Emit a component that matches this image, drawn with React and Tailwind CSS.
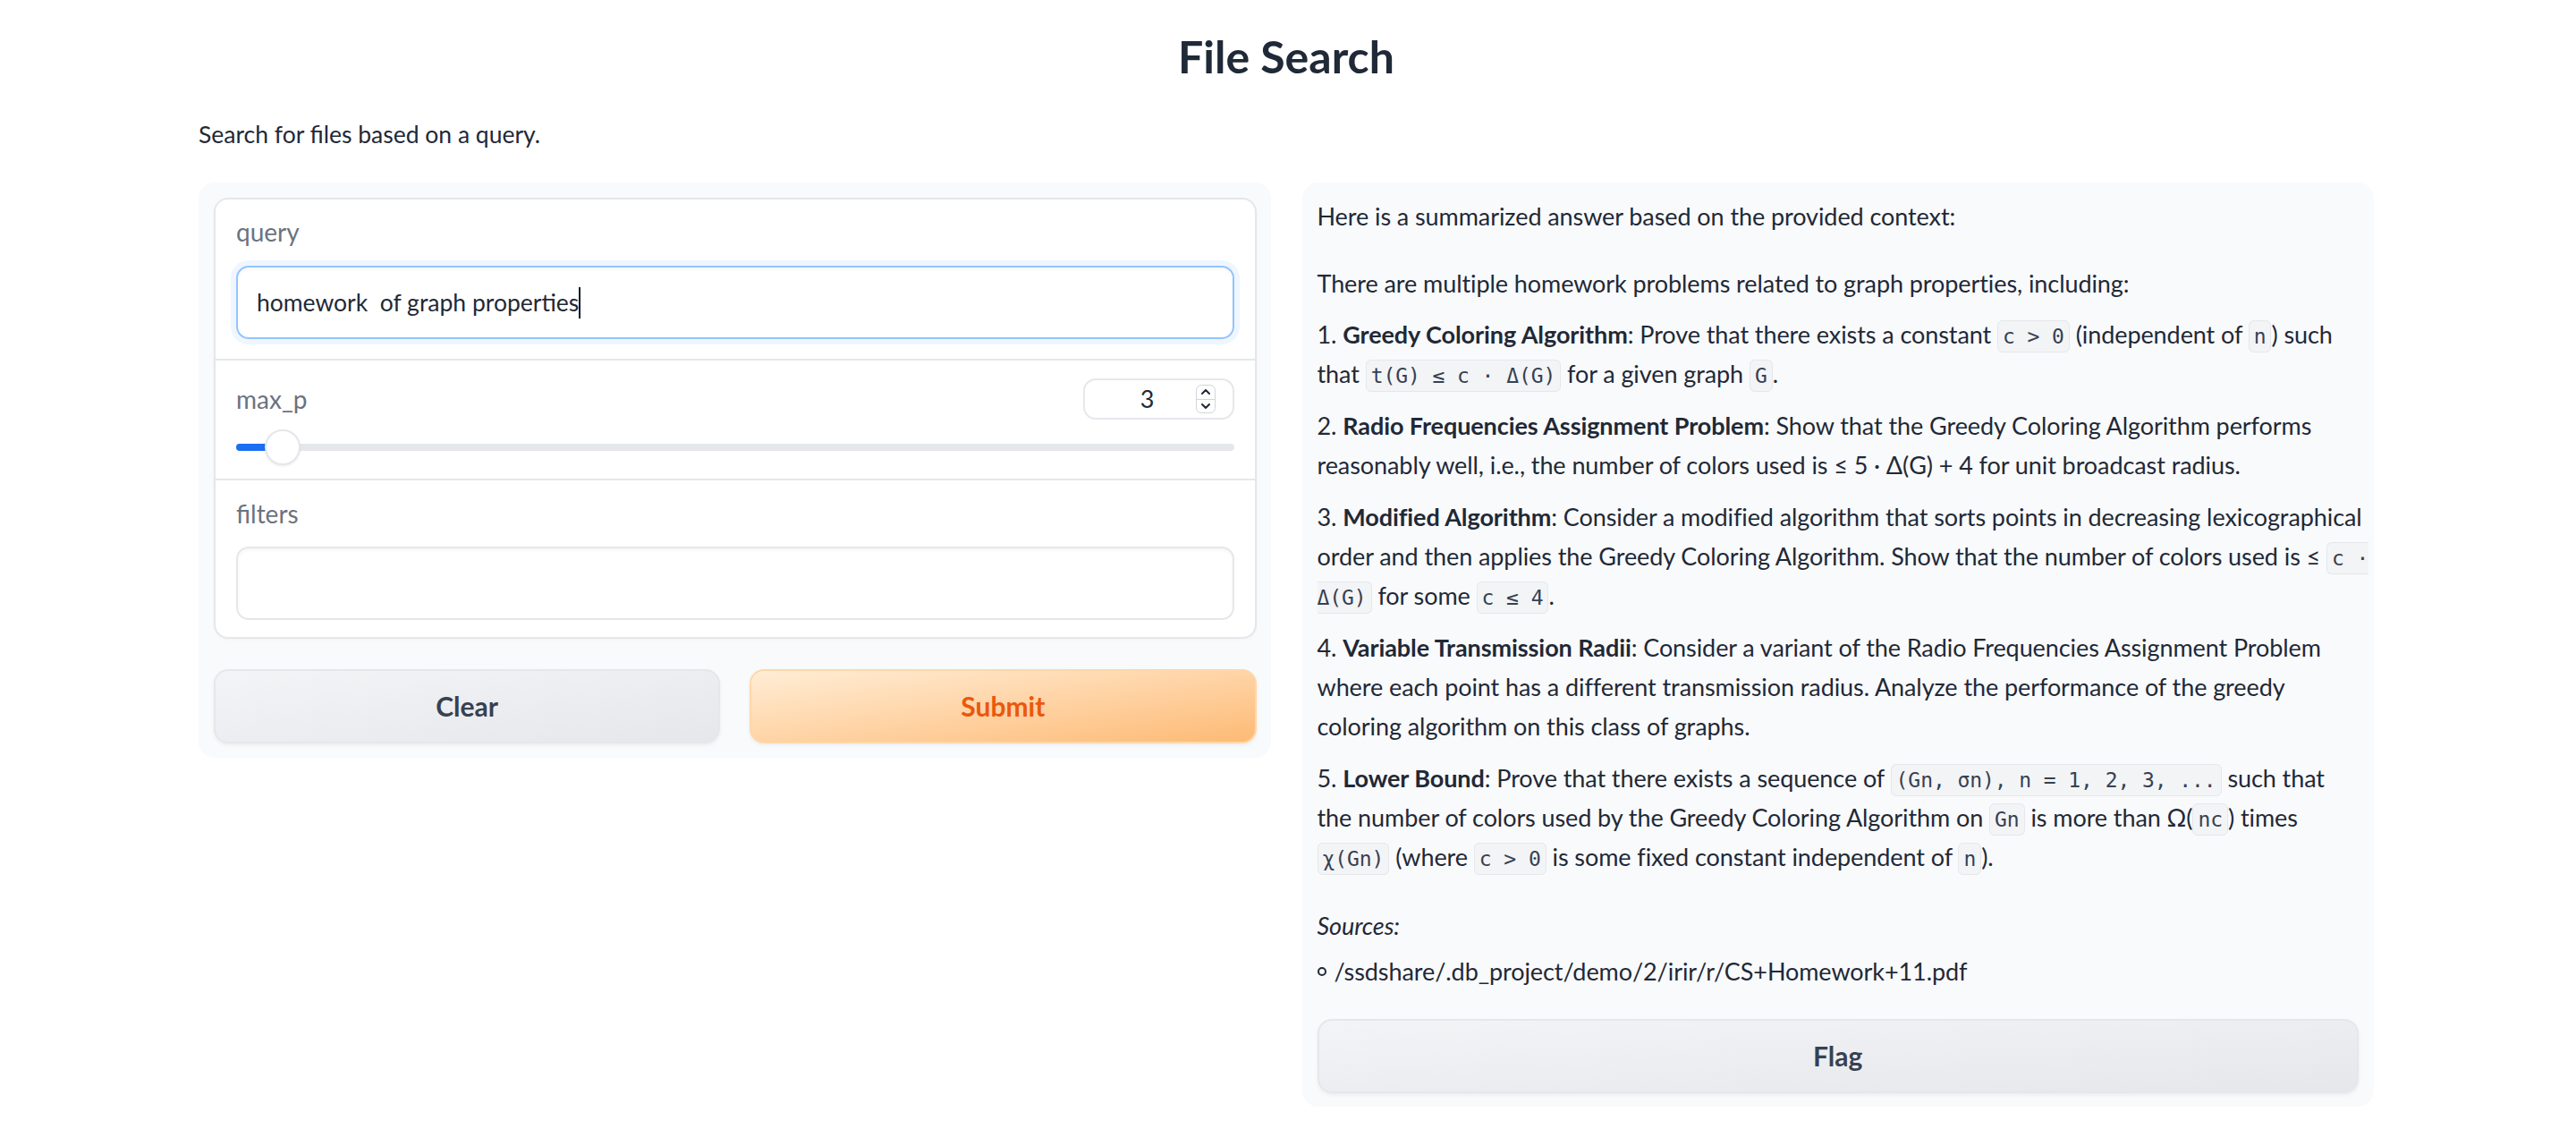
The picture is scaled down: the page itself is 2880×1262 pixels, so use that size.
import React from 'react';

// inline code chip, same look as the markdown renderer
const Code = ({ children }) => (
  <code className="font-['DejaVu_Sans_Mono',monospace] text-[23px] leading-none text-[#374151] bg-[#f3f4f6] border border-[#e5e7eb] rounded-[6px] px-[5px] py-[4px]">
    {children}
  </code>
);

const Label = ({ children }) => (
  <div className="text-[28px] leading-[36px] text-[#6b7280]">{children}</div>
);

const Spinner = () => (
  <div className="flex flex-col w-[22px] h-[32px] rounded-[6px] border border-[#d1d5db] bg-white overflow-hidden">
    <div className="flex-1 flex items-center justify-center border-b border-[#d1d5db]">
      <svg width="12" height="8" viewBox="0 0 12 8" fill="none">
        <path d="M2 6 L6 2 L10 6" stroke="#1f2937" strokeWidth="2" strokeLinecap="round" strokeLinejoin="round" />
      </svg>
    </div>
    <div className="flex-1 flex items-center justify-center">
      <svg width="12" height="8" viewBox="0 0 12 8" fill="none">
        <path d="M2 2 L6 6 L10 2" stroke="#1f2937" strokeWidth="2" strokeLinecap="round" strokeLinejoin="round" />
      </svg>
    </div>
  </div>
);

const GrayButton = ({ children }) => (
  <button className="h-[83px] w-full rounded-[16px] border-2 border-[#e5e7eb] bg-gradient-to-br from-[#f3f4f6] to-[#e5e7eb] text-[30px] font-bold text-[#374151] shadow-[0_2px_4px_rgba(0,0,0,0.06)]">
    {children}
  </button>
);

export default function App() {
  return (
    <div className="min-h-screen bg-white font-['Lato',sans-serif] text-[#1f2937]">
      <div className="ml-[222px] w-[2432px] pt-[32px]">
        <h1 className="text-center text-[50px] leading-[62px] font-bold text-[#1f2937]">File Search</h1>
        <p className="mt-[38px] text-[26.5px] leading-[36px]">Search for files based on a query.</p>

        <div className="mt-[36px] grid grid-cols-2 gap-[35px] items-start">
          {/* left column: inputs */}
          <div className="bg-[#f9fafb] rounded-[18px] pt-[17px] pl-[17px] pr-[16px] pb-[16px]">
            <div className="bg-white border-2 border-[#e5e7eb] rounded-[16px] shadow-[0_1px_3px_rgba(0,0,0,0.04)]">
              <div className="px-[23px] pt-[18px] pb-[22px] border-b-2 border-[#e5e7eb]">
                <Label>query</Label>
                <div className="mt-[20px] h-[82px] rounded-[14px] border-2 border-[#93c5fd] shadow-[0_0_0_6px_#eff6ff,inset_0_2px_4px_rgba(0,0,0,0.04)] flex items-center pl-[21px]">
                  <span className="whitespace-pre text-[26.5px] leading-[36px] text-[#1f2937]">homework  of graph properties</span>
                  <span className="w-[2px] h-[35px] bg-[#111827]" />
                </div>
              </div>

              <div className="px-[23px] pt-[20px] pb-[15px] border-b-2 border-[#e5e7eb]">
                <div className="flex items-center justify-between">
                  <Label>max_p</Label>
                  <div className="w-[169px] h-[46px] rounded-[14px] border-2 border-[#e5e7eb] flex items-center justify-end pr-[19px]">
                    <span className="text-[27px] text-[#1f2937]">3</span>
                    <div className="ml-[46px]">
                      <Spinner />
                    </div>
                  </div>
                </div>
                <div className="mt-[11px] h-[40px] relative flex items-center">
                  <div className="w-full h-[8px] rounded-full bg-[#e5e7eb]" />
                  <div className="absolute left-0 top-[16px] w-[40px] h-[8px] rounded-full bg-[#1c6ef2]" />
                  <div className="absolute left-[32px] top-0 w-[40px] h-[40px] rounded-full bg-white border-2 border-[#e5e7eb] shadow-[0_1px_3px_rgba(0,0,0,0.08)]" />
                </div>
              </div>

              <div className="px-[23px] pt-[19px] pb-[19px]">
                <Label>filters</Label>
                <div className="mt-[19px] h-[82px] rounded-[14px] border-2 border-[#e5e7eb] shadow-[inset_0_2px_4px_rgba(0,0,0,0.04)]" />
              </div>
            </div>

            <div className="mt-[34px] grid grid-cols-2 gap-[33px]">
              <GrayButton>Clear</GrayButton>
              <button className="h-[83px] w-full rounded-[16px] border-2 border-[#fed7aa] bg-gradient-to-br from-[#ffedd5] to-[#fdba74] text-[30px] font-bold text-[#ea580c] shadow-[0_2px_4px_rgba(0,0,0,0.06)]">
                Submit
              </button>
            </div>
          </div>

          {/* right column: answer */}
          <div className="bg-[#f9fafb] rounded-[18px] pt-[16px] px-[17px] pb-[15px]">
            <div className="text-[27px] leading-[44px] tracking-[-0.08px] whitespace-nowrap">
              <p className="mb-[31px]">Here is a summarized answer based on the provided context:</p>
              <p className="mb-[13px]">There are multiple homework problems related to graph properties, including:</p>
              <p className="mb-[14px]">
                1. <b>Greedy Coloring Algorithm</b>: Prove that there exists a constant <Code>c &gt; 0</Code> (independent of <Code>n</Code>) such
                <br />
                that <Code>t(G) ≤ c · Δ(G)</Code> for a given graph <Code>G</Code>.
              </p>
              <p className="mb-[14px]">
                2. <b>Radio Frequencies Assignment Problem</b>: Show that the Greedy Coloring Algorithm performs
                <br />
                reasonably well, i.e., the number of colors used is ≤ 5 · Δ(G) + 4 for unit broadcast radius.
              </p>
              <p className="mb-[14px]">
                3. <b>Modified Algorithm</b>: Consider a modified algorithm that sorts points in decreasing lexicographical
                <br />
                order and then applies the Greedy Coloring Algorithm. Show that the number of colors used is ≤ <Code>c ·<br />Δ(G)</Code> for some <Code>c ≤ 4</Code>.
              </p>
              <p className="mb-[14px]">
                4. <b>Variable Transmission Radii</b>: Consider a variant of the Radio Frequencies Assignment Problem
                <br />
                where each point has a different transmission radius. Analyze the performance of the greedy
                <br />
                coloring algorithm on this class of graphs.
              </p>
              <p>
                5. <b>Lower Bound</b>: Prove that there exists a sequence of <Code>(Gn, σn), n = 1, 2, 3, ...</Code> such that
                <br />
                the number of colors used by the Greedy Coloring Algorithm on <Code>Gn</Code> is more than Ω(<Code>nc</Code>) times
                <br />
                <Code>χ(Gn)</Code> (where <Code>c &gt; 0</Code> is some fixed constant independent of <Code>n</Code>).
              </p>
              <p className="mt-[33px] italic">Sources:</p>
              <ul className="mt-[7px]">
                <li className="flex items-center gap-[9px]">
                  <span className="w-[10px] h-[10px] rounded-full border-2 border-[#1f2937]" />
                  <span>/ssdshare/.db_project/demo/2/irir/r/CS+Homework+11.pdf</span>
                </li>
              </ul>
            </div>
            <div className="mt-[31px]">
              <GrayButton>Flag</GrayButton>
            </div>
          </div>
        </div>
      </div>
    </div>
  );
}
